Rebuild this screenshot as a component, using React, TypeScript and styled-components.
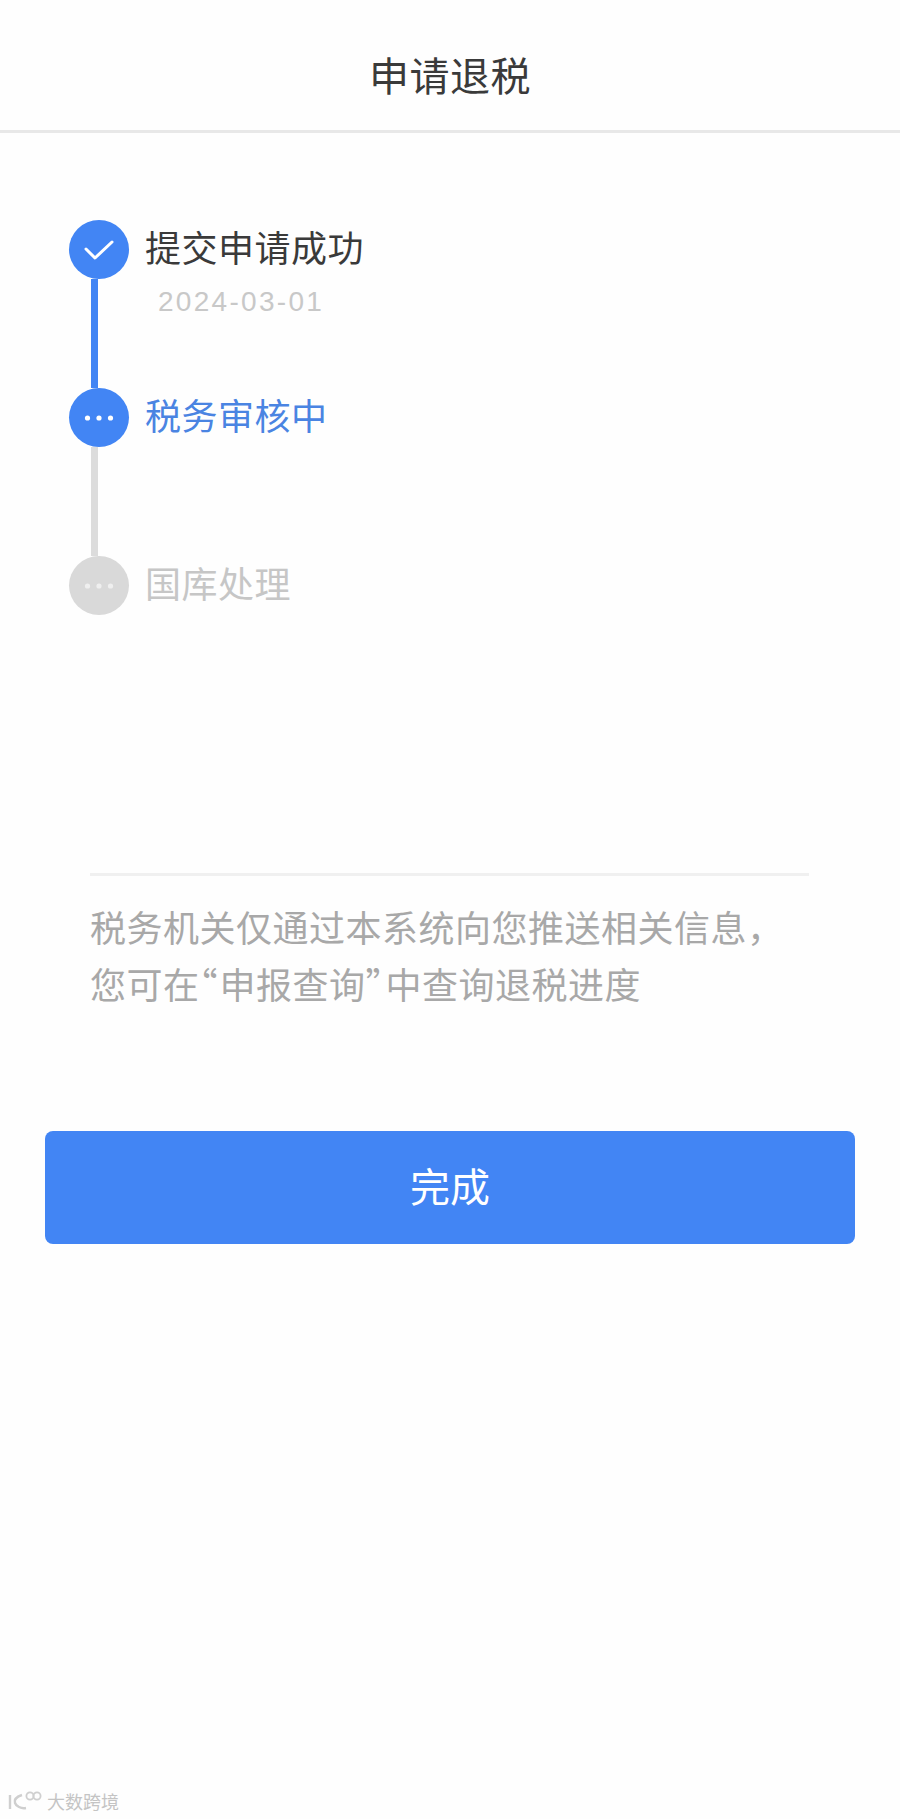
import styled, { createGlobalStyle } from 'styled-components';

const GlobalStyle = createGlobalStyle`
  html, body {
    margin: 0;
    padding: 0;
    background: #fefefe;
    font-family: "Noto Sans CJK SC", "Liberation Sans", sans-serif;
  }
  * {
    box-sizing: border-box;
  }
`;

const Page = styled.main`
  display: flex;
  flex-direction: column;
  width: 900px;
  height: 1819px;
  overflow: hidden;
`;

const Header = styled.header`
  display: flex;
  align-items: center;
  justify-content: center;
  height: 133px;
  padding-top: 18px;
  border-bottom: 3px solid #e8e8e8;
`;

const Title = styled.h1`
  margin: 0;
  font-size: 40px;
  font-weight: 400;
  line-height: 56px;
  letter-spacing: 0.5px;
  color: #3a3a3a;
`;

const Steps = styled.ol`
  display: flex;
  flex-direction: column;
  margin: 87px 0 0;
  padding: 0 0 0 69px;
  list-style: none;
`;

const Step = styled.li`
  display: flex;
  gap: 16px;
`;

const Rail = styled.div`
  display: flex;
  flex-direction: column;
  width: 60px;
`;

const Circle = styled.div<{ $done?: boolean }>`
  display: flex;
  align-items: center;
  justify-content: center;
  width: 60px;
  height: 59px;
  border-radius: 50%;
  background: ${(p) => (p.$done ? '#4285f4' : '#d9d9d9')};
`;

const Connector = styled.div<{ $done?: boolean }>`
  width: 7px;
  height: 109px;
  margin-left: 22px;
  background: ${(p) => (p.$done ? '#4285f4' : '#dcdcdc')};
`;

const StepBody = styled.div`
  display: flex;
  flex-direction: column;
  margin-top: -3px;
`;

const StepName = styled.div<{ $state: 'done' | 'active' | 'todo' }>`
  font-size: 36px;
  line-height: 58px;
  letter-spacing: 0.5px;
  color: ${(p) =>
    p.$state === 'done' ? '#3a3a3a' : p.$state === 'active' ? '#4a84e2' : '#c6c6c6'};
`;

const StepDate = styled.div`
  margin: 4px 0 0 13px;
  font-family: "Liberation Sans", sans-serif;
  font-size: 28px;
  line-height: 46px;
  letter-spacing: 2.3px;
  color: #c8c8c8;
`;

const Divider = styled.hr`
  width: 719px;
  height: 3px;
  margin: 258px 0 0 90px;
  border: 0;
  background: #f0f0f0;
`;

const Note = styled.p`
  margin: 22px 0 0 90px;
  font-size: 36px;
  line-height: 57px;
  letter-spacing: 0.5px;
  color: #a8a8a8;
`;

/* half-width forms of the quotes, the reference sets them narrow */
const Quote = styled.span`
  font-feature-settings: "halt";
  letter-spacing: 2px;
`;

const DoneButton = styled.button`
  display: block;
  width: 810px;
  height: 113px;
  margin: 119px 0 0 45px;
  padding: 0 0 6px;
  border: 0;
  border-radius: 8px;
  background: #4285f4;
  color: #fff;
  font-family: inherit;
  font-size: 40px;
`;

const Watermark = styled.footer`
  display: flex;
  align-items: center;
  gap: 5px;
  margin-top: auto;
  padding: 0 0 8px 7px;
`;

const WatermarkText = styled.span`
  font-size: 18px;
  line-height: 20px;
  color: #c4c4c4;
  text-shadow: 0 0 2px #fff, 0 0 2px #fff;
`;

const CheckIcon = () => (
  <svg width="30" height="22" viewBox="0 0 30 22" fill="none">
    <path d="M2 10l9 9L28 3" stroke="#fff" strokeWidth="3" strokeLinecap="round" strokeLinejoin="round" />
  </svg>
);

const DotsIcon = ({ color }: { color: string }) => (
  <svg width="30" height="8" viewBox="0 0 30 8" fill={color}>
    <circle cx="3.5" cy="4" r="2.6" />
    <circle cx="15" cy="4" r="2.6" />
    <circle cx="26.5" cy="4" r="2.6" />
  </svg>
);

const WatermarkLogo = () => (
  <svg width="35" height="20" viewBox="0 0 35 20" fill="none" stroke="#cfcfcf" strokeWidth="2.4">
    <path d="M3 4v14M15 4C9 6 7 9 8 12s6 6 11 5" />
    <circle cx="23" cy="5" r="3.6" strokeWidth="1.8" />
    <circle cx="30" cy="5" r="3.6" strokeWidth="1.8" />
  </svg>
);

export default function App() {
  return (
    <Page>
      <GlobalStyle />
      <Header>
        <Title>申请退税</Title>
      </Header>

      <Steps>
        <Step>
          <Rail>
            <Circle $done>
              <CheckIcon />
            </Circle>
            <Connector $done />
          </Rail>
          <StepBody>
            <StepName $state="done">提交申请成功</StepName>
            <StepDate>2024-03-01</StepDate>
          </StepBody>
        </Step>
        <Step>
          <Rail>
            <Circle $done>
              <DotsIcon color="#fff" />
            </Circle>
            <Connector />
          </Rail>
          <StepBody>
            <StepName $state="active">税务审核中</StepName>
          </StepBody>
        </Step>
        <Step>
          <Rail>
            <Circle>
              <DotsIcon color="#efefef" />
            </Circle>
          </Rail>
          <StepBody>
            <StepName $state="todo">国库处理</StepName>
          </StepBody>
        </Step>
      </Steps>

      <Divider />
      <Note>
        税务机关仅通过本系统向您推送相关信息，
        <br />
        您可在<Quote>“</Quote>申报查询<Quote>”</Quote>中查询退税进度
      </Note>
      <DoneButton>完成</DoneButton>

      <Watermark>
        <WatermarkLogo />
        <WatermarkText>大数跨境</WatermarkText>
      </Watermark>
    </Page>
  );
}
